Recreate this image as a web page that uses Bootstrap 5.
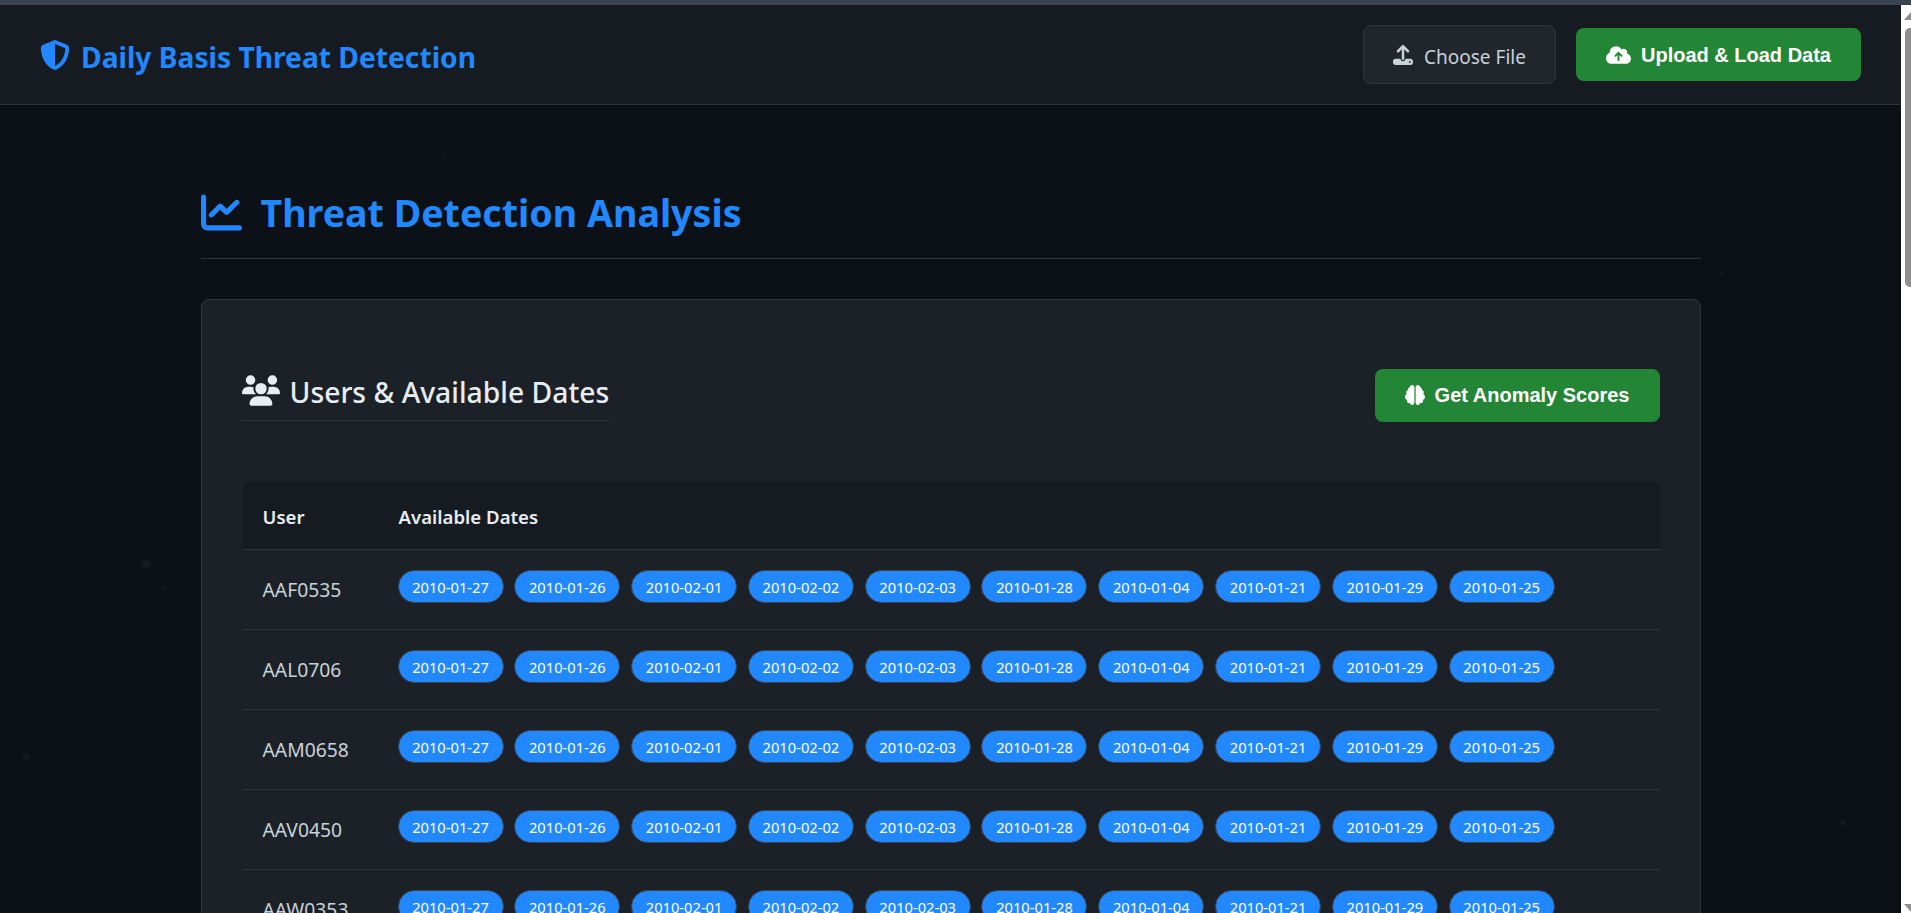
<!DOCTYPE html>
<html lang="en">
<head>
<meta charset="utf-8">
<title>Daily Basis Threat Detection</title>
<link href="https://cdn.jsdelivr.net/npm/bootstrap@5.3.0/dist/css/bootstrap.min.css" rel="stylesheet">
<style>
html, body { height: 100%; }
body { background: #fff; font-family: "Noto Sans", "Open Sans", sans-serif; overflow: hidden; }
.tab-strip { height: 5px; background: #3b4353; flex: none; }
.page-shell { min-height: 0; }
.page-main {
  min-width: 0; overflow: hidden;
  background-color: #0c1017;
  background-image:
    radial-gradient(circle 6px at 146px 559px, #1b1f26, transparent),
    radial-gradient(circle 3px at 165px 583px, #171b22, transparent),
    radial-gradient(circle 5px at 26px 752px, #1b1f26, transparent),
    radial-gradient(circle 4px at 1843px 818px, #1b1f26, transparent),
    radial-gradient(circle 3px at 1721px 269px, #171b22, transparent),
    radial-gradient(circle 3px at 445px 150px, #171b22, transparent);
}
.top-bar { height: 100px; padding: 0 40px; background: #161b22; border-bottom: 1px solid #30363d; }
.brand-mark { color: #2188ff; font-size: 28.2px; font-weight: 700; gap: 11px; line-height: 1; padding-top: 1px; }
.brand-mark svg { width: 30px; height: 30px; }
.brand-mark span { padding-top: 4px; }
.ico { fill: currentColor; flex: none; }
.pick-file { height: 59px; width: 193px; background: #21262d; border: 1px solid #30363d; border-radius: 8px; color: #c9d1d9; font-size: 19px; gap: 11px; }
.pick-file svg { width: 20px; height: 20px; }
.pick-file span { padding-top: 5px; }
.act-btn { background: #238636; color: #fff; border: 0; border-radius: 8px; font-family: "Liberation Sans", sans-serif; font-weight: 700; font-size: 20px; height: 53px; padding: 0 30px; gap: 10px; }
.act-btn:hover { background: #238636; color: #fff; }
.act-btn svg { height: 20px; }
.bar-actions { gap: 20px; }
.sheet { width: 1500px; padding-top: 84px; }
.page-title { color: #2188ff; font-size: 37.6px; font-weight: 700; line-height: 1.3; gap: 19px; margin: 0; padding-bottom: 20px; border-bottom: 1px solid #30363d; }
.page-title svg { width: 41px; height: 41px; margin-bottom: 2px; }
.panel { margin-top: 40px; background: #1c2128; border: 1px solid #30363d; border-radius: 8px; padding: 69px 40px 40px; }
.panel-head { margin-bottom: 60px; }
.panel-title { color: #e6edf3; font-size: 28.3px; font-weight: 500; line-height: 1; gap: 10px; margin: 5px 0 0; padding-bottom: 14px; border-bottom: 1px solid #30363d; }
.panel-title svg { width: 38px; height: 31px; }
.panel-title span { padding-top: 4px; }
.date-table { --bs-table-bg: transparent; --bs-table-color: #c9d1d9; --bs-table-border-color: #30363d; margin: 0 0 0 1px; width: calc(100% - 1px); border-collapse: separate; border-spacing: 0; }
.date-table thead th { background: #161b22; color: #e6edf3; font-size: 18.6px; font-weight: 600; height: 68px; padding: 4px 20px 0; vertical-align: middle; border-bottom: 1px solid #30363d; box-shadow: none; }
.date-table thead th:first-child { border-top-left-radius: 8px; width: 136px; }
.date-table thead th:last-child { border-top-right-radius: 8px; }
.date-table tbody td { height: 80px; padding: 20px 20px; vertical-align: middle; border-bottom: 1px solid #30363d; font-size: 19.3px; box-shadow: none; }
.date-table tbody td:first-child { padding-top: 23px; }
.date-list { gap: 10.8px; margin-bottom: 5px; margin-left: -1px; }
.date-pill { background: #2188ff; color: #fff; border: 1px solid #3a4250; border-radius: 17px; width: 106px; height: 33px; font-size: 14.7px; line-height: 1; }
.fake-scroll { width: 10px; flex: none; background: #fff; overflow: hidden; }
.scroll-up { width: 0; height: 0; margin: 7px 0 0 3px; border-left: 7px solid transparent; border-right: 7px solid transparent; border-bottom: 8px solid #8f8f8f; flex: none; }
.scroll-thumb { width: 15px; height: 259px; margin: 8px 0 0 4px; background: #8f8f8f; border-radius: 5px; flex: none; }
.scroll-down { width: 0; height: 0; margin: 0 0 1px 3px; border-left: 7px solid transparent; border-right: 7px solid transparent; border-top: 8px solid #8f8f8f; flex: none; }
</style>
</head>
<body class="d-flex flex-column">
<div class="tab-strip"></div>
<div class="page-shell d-flex flex-grow-1">
  <div class="page-main flex-grow-1">
    <nav class="top-bar d-flex align-items-center justify-content-between">
      <div class="brand-mark d-flex align-items-center">
        <svg class="ico" viewBox="0 0 512 512"><path d="M256 0c4.6 0 9.2 1 13.4 2.9L457.7 82.8c22 9.3 38.4 31 38.3 57.2c-.5 99.2-41.3 280.7-213.6 363.2c-16.7 8-36.1 8-52.8 0C57.3 420.7 16.5 239.2 16 140c-.1-26.2 16.3-47.9 38.3-57.2L242.7 2.9C246.8 1 251.4 0 256 0zm0 66.8V444.8C394 378 431.1 230.1 432 141.4L256 66.8l0 0z"/></svg>
        <span>Daily Basis Threat Detection</span>
      </div>
      <div class="bar-actions d-flex align-items-center">
        <div class="pick-file d-flex align-items-center justify-content-center">
          <svg class="ico" viewBox="0 0 512 512"><path d="M288 109.3V352c0 17.7-14.3 32-32 32s-32-14.3-32-32V109.3l-73.4 73.4c-12.5 12.5-32.8 12.5-45.3 0s-12.5-32.8 0-45.3l128-128c12.5-12.5 32.8-12.5 45.3 0l128 128c12.5 12.5 12.5 32.8 0 45.3s-32.8 12.5-45.3 0L288 109.3zM64 352H192c0 35.3 28.7 64 64 64s64-28.7 64-64H448c35.3 0 64 28.7 64 64v32c0 35.3-28.7 64-64 64H64c-35.3 0-64-28.7-64-64V416c0-35.3 28.7-64 64-64zM432 456a24 24 0 1 0 0-48 24 24 0 1 0 0 48z"/></svg>
          <span>Choose File</span>
        </div>
        <button class="btn act-btn d-flex align-items-center" type="button">
          <svg class="ico" viewBox="0 0 640 512"><path d="M144 480C64.5 480 0 415.5 0 336c0-62.8 40.2-116.2 96.2-135.9c-.1-2.7-.2-5.4-.2-8.1c0-88.4 71.6-160 160-160c59.3 0 111 32.2 138.7 80.2C409.9 102 428.3 96 448 96c53 0 96 43 96 96c0 12.2-2.3 23.8-6.4 34.6C596 238.4 640 290.1 640 352c0 70.7-57.3 128-128 128H144zm79-217c-9.4 9.4-9.4 24.6 0 33.9s24.6 9.4 33.9 0l39-39V392c0 13.3 10.7 24 24 24s24-10.7 24-24V257.9l39 39c9.4 9.4 24.6 9.4 33.9 0s9.4-24.6 0-33.9l-80-80c-9.4-9.4-24.6-9.4-33.9 0l-80 80z"/></svg>
          <span>Upload &amp; Load Data</span>
        </button>
      </div>
    </nav>
    <main class="sheet mx-auto">
      <h1 class="page-title d-flex align-items-center">
        <svg class="ico" viewBox="0 0 512 512"><path d="M64 64c0-17.7-14.3-32-32-32S0 46.3 0 64V400c0 44.2 35.8 80 80 80H480c17.7 0 32-14.3 32-32s-14.3-32-32-32H80c-8.8 0-16-7.2-16-16V64zm406.6 86.6c12.5-12.5 12.5-32.8 0-45.3s-32.8-12.5-45.3 0L320 210.7l-57.4-57.4c-12.5-12.5-32.8-12.5-45.3 0l-112 112c-12.5 12.5-12.5 32.8 0 45.3s32.8 12.5 45.3 0L240 221.3l57.4 57.4c12.5 12.5 32.8 12.5 45.3 0l128-128z"/></svg>
        <span>Threat Detection Analysis</span>
      </h1>
      <section class="panel">
        <div class="panel-head d-flex align-items-start justify-content-between">
          <h3 class="panel-title d-flex align-items-center">
            <svg class="ico" viewBox="0 0 640 512"><path d="M144 0a80 80 0 1 1 0 160A80 80 0 1 1 144 0zM512 0a80 80 0 1 1 0 160A80 80 0 1 1 512 0zM0 298.7C0 239.8 47.8 192 106.7 192h42.7c15.9 0 31 3.5 44.6 9.7c-1.3 7.2-1.9 14.7-1.9 22.3c0 38.2 16.8 72.5 43.3 96c-.2 0-.4 0-.7 0H21.3C9.6 320 0 310.4 0 298.7zM405.3 320c-.2 0-.4 0-.7 0c26.6-23.5 43.3-57.8 43.3-96c0-7.6-.7-15-1.9-22.3c13.6-6.3 28.7-9.7 44.6-9.7h42.7C592.2 192 640 239.8 640 298.7c0 11.8-9.6 21.3-21.3 21.3H405.3zM224 224a96 96 0 1 1 192 0 96 96 0 1 1 -192 0zM128 485.3C128 411.7 187.7 352 261.3 352H378.7C452.3 352 512 411.7 512 485.3c0 14.7-11.9 26.7-26.7 26.7H154.7c-14.7 0-26.7-11.9-26.7-26.7z"/></svg>
            <span>Users &amp; Available Dates</span>
          </h3>
          <button class="btn act-btn d-flex align-items-center" type="button">
            <svg class="ico" viewBox="0 0 512 512"><path d="M184 0c30.9 0 56 25.1 56 56V456c0 30.9-25.1 56-56 56c-28.9 0-52.7-21.9-55.7-50.1c-5.2 1.4-10.7 2.1-16.3 2.1c-35.3 0-64-28.7-64-64c0-7.4 1.3-14.6 3.6-21.2C21.4 367.4 0 338.2 0 304c0-31.9 18.7-59.5 45.8-72.3C37.1 220.8 32 207 32 192c0-30.7 21.6-56.3 50.4-62.6C80.8 123.9 80 118 80 112c0-29.9 20.6-55.1 48.3-62.1C131.3 21.9 155.1 0 184 0zM328 0c28.9 0 52.6 21.9 55.7 49.9c27.8 7 48.3 32.1 48.3 62.1c0 6-.8 11.9-2.4 17.4c28.8 6.2 50.4 31.9 50.4 62.6c0 15-5.1 28.8-13.8 39.7C493.3 244.5 512 272.1 512 304c0 34.2-21.4 63.4-51.6 74.8c2.3 6.6 3.6 13.8 3.6 21.2c0 35.3-28.7 64-64 64c-5.6 0-11.1-.7-16.3-2.1c-3 28.2-26.8 50.1-55.7 50.1c-30.9 0-56-25.1-56-56V56c0-30.9 25.1-56 56-56z"/></svg>
            <span>Get Anomaly Scores</span>
          </button>
        </div>
        <table class="table date-table">
          <thead><tr><th>User</th><th>Available Dates</th></tr></thead>
          <tbody id="rows"></tbody>
        </table>
      </section>
    </main>
  </div>
  <div class="fake-scroll d-flex flex-column">
    <div class="scroll-up"></div>
    <div class="scroll-thumb"></div>
    <div class="flex-grow-1"></div>
    <div class="scroll-down"></div>
  </div>
</div>
<script>
var users = ["AAF0535","AAL0706","AAM0658","AAV0450","AAW0353"];
var dates = ["2010-01-27","2010-01-26","2010-02-01","2010-02-02","2010-02-03","2010-01-28","2010-01-04","2010-01-21","2010-01-29","2010-01-25"];
document.getElementById("rows").innerHTML = users.map(function (u) {
  return '<tr><td>' + u + '</td><td><div class="date-list d-flex">' +
    dates.map(function (d) { return '<span class="date-pill d-flex align-items-center justify-content-center">' + d + '</span>'; }).join('') +
    '</div></td></tr>';
}).join('');
</script>
<script src="https://cdn.jsdelivr.net/npm/bootstrap@5.3.0/dist/js/bootstrap.bundle.min.js"></script>
</body>
</html>
